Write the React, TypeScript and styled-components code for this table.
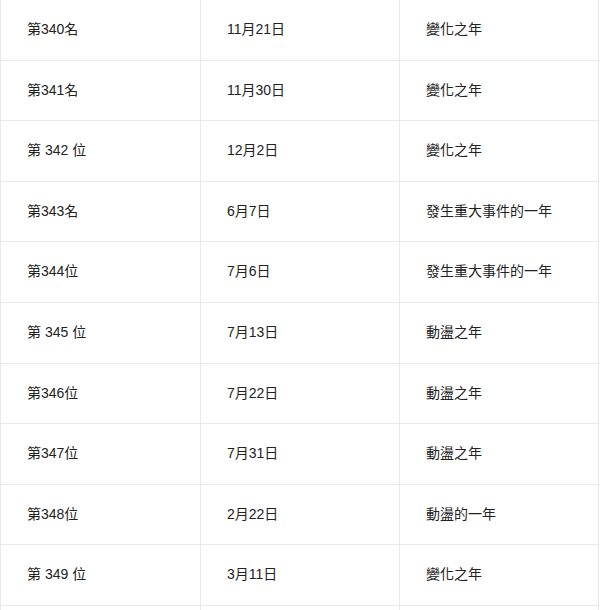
import React from 'react';
import styled, { createGlobalStyle } from 'styled-components';

const GlobalStyle = createGlobalStyle`
  html, body {
    margin: 0;
    padding: 0;
    background: #fff;
  }
  body {
    font-family: "Liberation Sans", "Noto Sans CJK TC", sans-serif;
    overflow: hidden;
  }
`;

const Table = styled.div`
  display: grid;
  grid-template-columns: 200px 199px 200px;
  width: 599px;
`;

const Cell = styled.div<{ $last?: boolean }>`
  box-sizing: border-box;
  min-height: 60.6px;
  padding: 19px 26px;
  line-height: 21.6px;
  font-size: 14px;
  color: #222;
  border-left: 1px solid #e9e9e9;
  border-bottom: 1px solid #e9e9e9;
  border-right: ${(p) => (p.$last ? '1px solid #e9e9e9' : 'none')};
  white-space: nowrap;
`;

const rows: [string, string, string][] = [
  ['第340名', '11月21日', '變化之年'],
  ['第341名', '11月30日', '變化之年'],
  ['第 342 位', '12月2日', '變化之年'],
  ['第343名', '6月7日', '發生重大事件的一年'],
  ['第344位', '7月6日', '發生重大事件的一年'],
  ['第 345 位', '7月13日', '動盪之年'],
  ['第346位', '7月22日', '動盪之年'],
  ['第347位', '7月31日', '動盪之年'],
  ['第348位', '2月22日', '動盪的一年'],
  ['第 349 位', '3月11日', '變化之年'],
];

const App: React.FC = () => (
  <>
    <GlobalStyle />
    <Table>
      {rows.map(([rank, date, label]) => (
        <React.Fragment key={rank}>
          <Cell>{rank}</Cell>
          <Cell>{date}</Cell>
          <Cell $last>{label}</Cell>
        </React.Fragment>
      ))}
      {/* next row starts just below the fold */}
      <Cell />
      <Cell />
      <Cell $last />
    </Table>
  </>
);

export default App;
